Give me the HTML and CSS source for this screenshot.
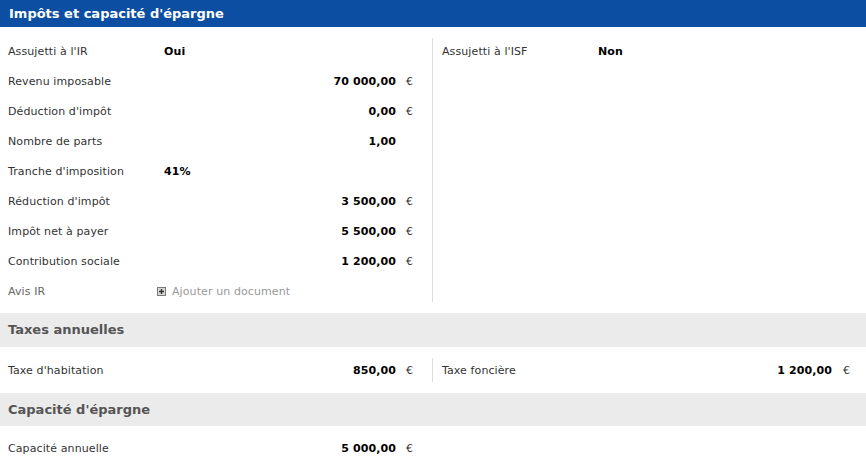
FILE: index.html
```html
<!DOCTYPE html>
<html lang="fr">
<head>
    <meta charset="UTF-8">
    <title>Impôts et capacité d'épargne</title>
    <link rel="stylesheet" href="styles.css">
</head>
<body>

    <div class="panel">
        <h2 class="panel-title">Impôts et capacité d'épargne</h2>

        <!-- Impôt sur le revenu / ISF -->
        <div class="section">
            <div class="col col-left">
                <div class="row"><span class="label">Assujetti à l'IR</span><span class="value">Oui</span></div>
                <div class="row"><span class="label">Revenu imposable</span><span class="amount">70 000,00</span><span class="unit">€</span></div>
                <div class="row"><span class="label">Déduction d'impôt</span><span class="amount">0,00</span><span class="unit">€</span></div>
                <div class="row"><span class="label">Nombre de parts</span><span class="amount">1,00</span><span class="unit"></span></div>
                <div class="row"><span class="label">Tranche d'imposition</span><span class="value">41%</span></div>
                <div class="row"><span class="label">Réduction d'impôt</span><span class="amount">3 500,00</span><span class="unit">€</span></div>
                <div class="row"><span class="label">Impôt net à payer</span><span class="amount">5 500,00</span><span class="unit">€</span></div>
                <div class="row"><span class="label">Contribution sociale</span><span class="amount">1 200,00</span><span class="unit">€</span></div>
                <div class="row row-doc">
                    <span class="label muted">Avis IR</span>
                    <a class="add-doc" href="#">
                        <svg width="9" height="9" viewBox="0 0 9 9"><rect x="0.5" y="0.5" width="8" height="8" fill="#d8d8d8" stroke="#7a7a7a"/><path d="M4.5 2v5M2 4.5h5" stroke="#333" stroke-width="1.4"/></svg>
                        Ajouter un document
                    </a>
                </div>
            </div>
            <div class="col col-right">
                <div class="row"><span class="label">Assujetti à l'ISF</span><span class="value">Non</span></div>
            </div>
        </div>

        <h3 class="section-title">Taxes annuelles</h3>
        <div class="section">
            <div class="col col-left">
                <div class="row"><span class="label">Taxe d'habitation</span><span class="amount">850,00</span><span class="unit">€</span></div>
            </div>
            <div class="col col-right">
                <div class="row"><span class="label">Taxe foncière</span><span class="amount">1 200,00</span><span class="unit">€</span></div>
            </div>
        </div>

        <h3 class="section-title section-title-last">Capacité d'épargne</h3>
        <div class="section">
            <div class="col col-left">
                <div class="row"><span class="label">Capacité annuelle</span><span class="amount">5 000,00</span><span class="unit">€</span></div>
            </div>
        </div>
    </div>

</body>
</html>
```

FILE: styles.css
```css
body {
    margin: 0;
    font-family: 'DejaVu Sans', Verdana, sans-serif;
    font-size: 11px;
    letter-spacing: 0.1px;
    color: #333;
    background: #fff;
}

.panel {
    width: 866px;
}

.panel-title {
    margin: 0;
    height: 27px;
    line-height: 27px;
    padding-left: 9px;
    background: #0b4ea2;
    color: #fff;
    font-size: 13px;
    font-weight: bold;
    letter-spacing: 0;
}

.section {
    display: flex;
    padding: 9px 0 7px;
}

.section-title {
    margin: 0;
    height: 34px;
    line-height: 34px;
    padding-left: 8px;
    background: #ebebeb;
    color: #555;
    font-size: 13px;
    font-weight: bold;
    letter-spacing: 0;
}

.section-title-last {
    height: 33px;
    line-height: 33px;
}

.section-title + .section {
    padding: 8px 0;
}

.section-title-last + .section {
    padding-top: 7px;
}

.col-left {
    width: 432px;
}

.col-right {
    width: 433px;
    border-left: 1px solid #dcdcdc;
    margin: 2px 0 4px;
}

.section-title + .section .col-right {
    margin: 3px 0;
}

.row {
    display: flex;
    align-items: center;
    height: 30px;
    padding-left: 8px;
}

.col-right .row {
    height: 26px;
    padding-left: 9px;
}

.section-title + .section .col-right .row {
    height: 24px;
}

.label {
    width: 156px;
    flex-shrink: 0;
}

.value {
    font-weight: bold;
    color: #000;
}

.amount {
    flex: 1;
    text-align: right;
    font-weight: bold;
    color: #000;
}

.unit {
    width: 26px;
    padding-left: 10px;
    flex-shrink: 0;
}

.col-right .unit {
    width: 23px;
    padding-left: 11px;
}

.muted {
    color: #666;
}

.row-doc .label {
    width: 149px;
}

.add-doc {
    display: flex;
    align-items: center;
    gap: 6px;
    color: #999;
    text-decoration: none;
}
```
